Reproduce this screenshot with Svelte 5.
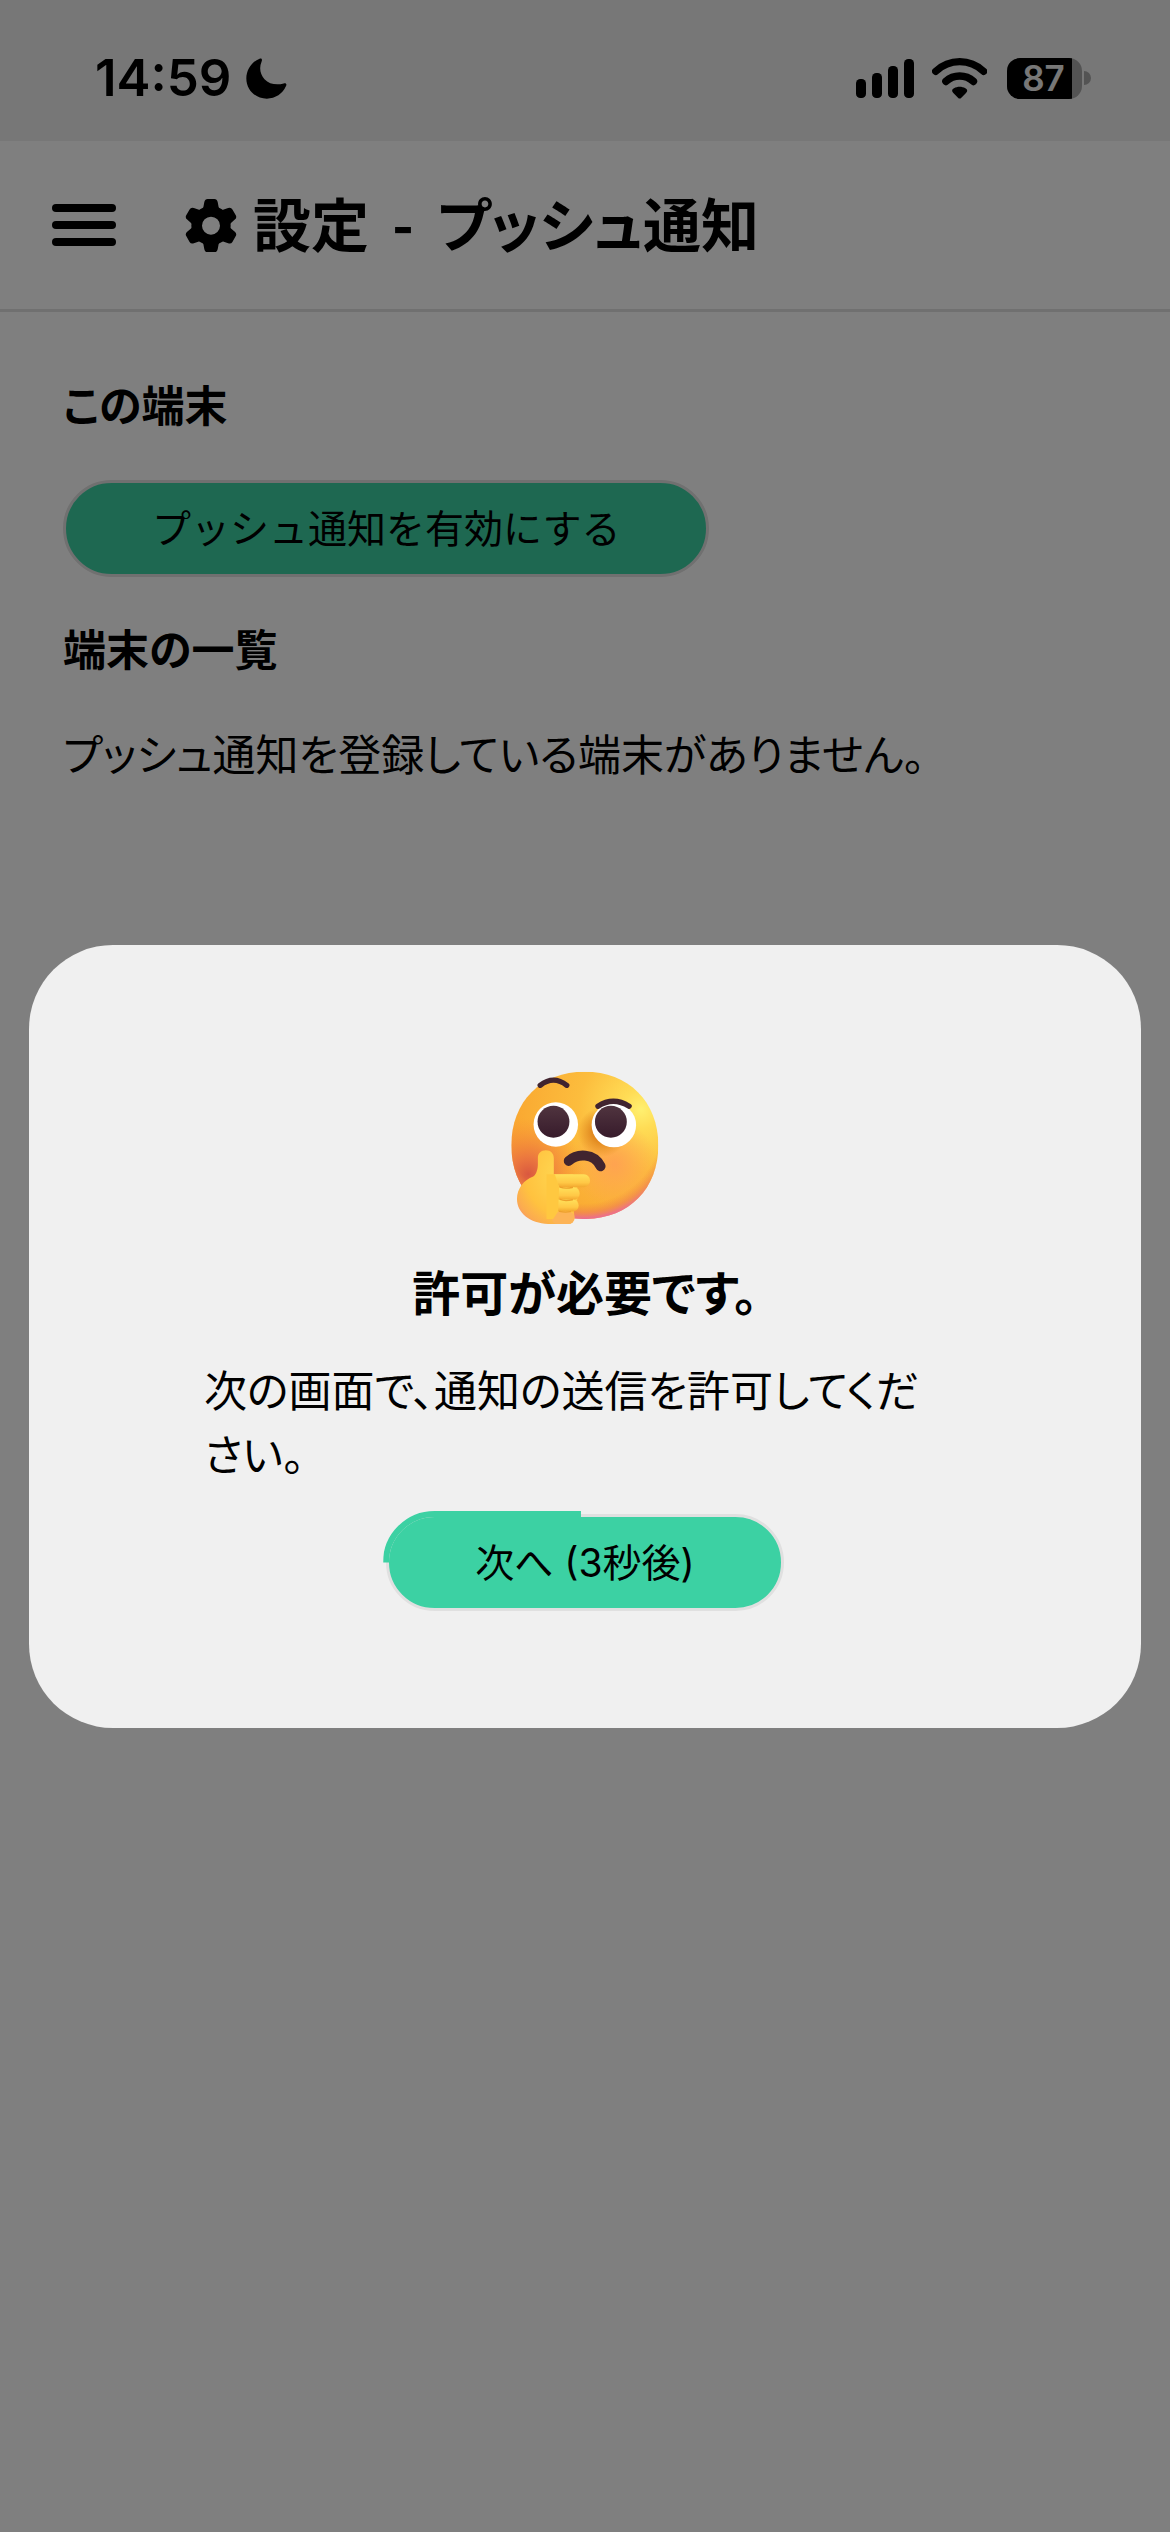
<script>
  let seconds = 3;
  let battery = 87;

  const bars = [
    { x: 0, height: 57 },
    { x: 48, height: 75 },
    { x: 96, height: 96 },
    { x: 144, height: 117 },
  ];
  const teeth = [0, 60, 120, 180, 240, 300];
</script>

<div class="page">
  <div class="status">
    <span class="clock">14:59</span>
    <svg class="moon" viewBox="28 28 124 124" aria-hidden="true">
      <path d="M69 30C76 27 78 33 75 39C67 58 71 78 84 92C98 107 120 111 142 105C149 103 152 107 149 113C139 136 117 151 91 151C56 151 29 124 29 90C29 64 45 40 69 30Z" />
    </svg>
    <div class="indicators">
      <svg class="signal" viewBox="0 0 174 117" aria-hidden="true">
        {#each bars as bar}
          <rect x={bar.x} y={117 - bar.height} width="30" height={bar.height} rx="13" />
        {/each}
      </svg>
      <svg class="wifi" viewBox="261 36 165 123" aria-hidden="true">
        <path d="M272 76Q303 47 344 47T416 76" fill="none" stroke="#000" stroke-width="22" stroke-linecap="round" />
        <path d="M303 106Q320 90 344 90T385 106" fill="none" stroke="#000" stroke-width="23" stroke-linecap="round" />
        <path d="M325 141C319 135 321 130 327 127C337 121 351 121 361 127C367 130 369 135 363 141L349 155Q344 160 339 155Z" />
      </svg>
      <div class="battery">
        <div class="cell">
          <div class="level" style="width: {battery}%"></div>
          <span class="percent">{battery}</span>
        </div>
        <div class="nub"></div>
      </div>
    </div>
  </div>

  <header>
    <button class="menu" aria-label="メニュー">
      <span></span>
      <span></span>
      <span></span>
    </button>
    <svg class="gear" viewBox="44 42 156 159" aria-hidden="true">
      <circle cx="122" cy="122" r="43" fill="none" stroke="#000" stroke-width="32" />
      {#each teeth as angle}
        <path transform="rotate({angle} 122 122)" d="M94 75Q98 72 99 67L102 51Q104 42 112 42H132Q140 42 142 51L145 67Q146 72 150 75L142 90H102Z" />
      {/each}
    </svg>
    <h1>設定 <span class="dash">-</span> プッシュ通知</h1>
  </header>

  <main>
    <h2>この端末</h2>
    <button class="pill">プッシュ通知を有効にする</button>
    <h2>端末の一覧</h2>
    <p>プッシュ通知を登録している端末がありません。</p>
  </main>
</div>

<div class="overlay">
  <div class="modal" role="dialog" aria-modal="true" aria-labelledby="dialog-title">
    <svg class="emoji" viewBox="63 65 446 462" aria-hidden="true">
      <defs>
        <radialGradient id="face" gradientUnits="userSpaceOnUse" cx="455" cy="180" r="420">
          <stop offset="0" stop-color="#fff070" />
          <stop offset=".14" stop-color="#ffdc55" />
          <stop offset=".45" stop-color="#fcbd3d" />
          <stop offset="1" stop-color="#f9a42f" />
        </radialGradient>
        <radialGradient id="cheek" gradientUnits="userSpaceOnUse" cx="115" cy="375" r="170">
          <stop offset="0" stop-color="#d9583f" />
          <stop offset=".3" stop-color="#e96f41" stop-opacity=".85" />
          <stop offset="1" stop-color="#f98a35" stop-opacity="0" />
        </radialGradient>
        <radialGradient id="glow" gradientUnits="userSpaceOnUse" cx="375" cy="345" r="130">
          <stop offset="0" stop-color="#ffa350" />
          <stop offset="1" stop-color="#ffa350" stop-opacity="0" />
        </radialGradient>
        <radialGradient id="rim" gradientUnits="userSpaceOnUse" cx="280" cy="225" r="290">
          <stop offset=".82" stop-color="#f08a3a" stop-opacity="0" />
          <stop offset=".91" stop-color="#ef7d52" stop-opacity=".6" />
          <stop offset="1" stop-color="#e860b0" />
        </radialGradient>
        <radialGradient id="shade" gradientUnits="userSpaceOnUse" cx="338" cy="248" r="75">
          <stop offset=".4" stop-color="#e28a20" />
          <stop offset="1" stop-color="#e28a20" stop-opacity="0" />
        </radialGradient>
        <linearGradient id="pupil" x1="0" y1="0" x2="0" y2="1">
          <stop offset="0" stop-color="#50343f" />
          <stop offset="1" stop-color="#371b2b" />
        </linearGradient>
        <radialGradient id="hand" gradientUnits="userSpaceOnUse" cx="235" cy="375" r="215">
          <stop offset="0" stop-color="#ffdc55" />
          <stop offset=".6" stop-color="#ffc23f" />
          <stop offset=".8" stop-color="#fbab50" />
          <stop offset="1" stop-color="#f57a86" />
        </radialGradient>
        <linearGradient id="finger" x1="0" y1="0" x2="0" y2="1">
          <stop offset="0" stop-color="#ffe05a" />
          <stop offset=".65" stop-color="#ffc846" />
          <stop offset="1" stop-color="#f3a82f" />
        </linearGradient>
        <clipPath id="head">
          <path d="M285 66C417 66 507 156 507 288C507 420 417 510 285 510C153 510 64 420 64 288C64 156 153 66 285 66Z" />
        </clipPath>
      </defs>
      <g clip-path="url(#head)">
        <rect x="63" y="65" width="446" height="446" fill="url(#face)" />
        <rect x="63" y="65" width="446" height="446" fill="url(#glow)" />
        <rect x="63" y="65" width="446" height="446" fill="url(#cheek)" />
        <rect x="63" y="65" width="446" height="446" fill="url(#rim)" />
        <circle cx="338" cy="248" r="75" fill="url(#shade)" />
      </g>
      <circle cx="198" cy="225" r="67" fill="#fff" />
      <circle cx="373" cy="227" r="67" fill="#fff" />
      <circle cx="191" cy="217" r="48" fill="url(#pupil)" />
      <circle cx="364" cy="217" r="48" fill="url(#pupil)" />
      <g fill="none" stroke="#41242f" stroke-linecap="round">
        <path d="M151 107Q191 76 231 107" stroke-width="16" />
        <path d="M325 170Q371 140 419 170" stroke-width="16" />
        <path d="M237 335C262 312 313 310 333 351" stroke-width="30" />
      </g>
      <path d="M168 303C183 303 192 313 192 327V376H250L266 425L262 455L252 488C257 506 252 524 236 525H175C120 523 81 492 81 450C81 418 102 392 130 382C139 376 144 360 144 344V326C144 313 153 303 168 303Z" fill="url(#hand)" />
      <path d="M192 375H282C294 375 301 384 301 395C301 406 293 414 282 414H208Z" fill="url(#finger)" />
      <rect x="190" y="415" width="80" height="37" rx="18" fill="url(#finger)" />
      <rect x="190" y="451" width="77" height="36" rx="18" fill="url(#finger)" />
      <rect x="185" y="487" width="70" height="38" rx="19" fill="#fdb457" />
      <path d="M195 375L208 414L205 487L190 510H170V375Z" fill="#ffc840" />
      <g fill="none" stroke="#eda02b" stroke-width="4" stroke-linecap="round">
        <path d="M211 414Q225 419 248 415" />
        <path d="M211 451Q225 457 248 452" />
        <path d="M209 487Q225 491 242 488" />
      </g>
    </svg>
    <h3 id="dialog-title">許可が必要です。</h3>
    <p>次の画面で、通知の送信を許可してください。</p>
    <button class="pill next">
      次へ ({seconds}秒後)
      <span class="progress"></span>
    </button>
  </div>
</div>

<style>
  :global(body) {
    margin: 0;
    background: #fff;
    color: #000;
    font-family: "Noto Sans CJK JP", sans-serif;
  }
  .page {
    min-height: 100vh;
  }
  .status {
    display: flex;
    align-items: center;
    gap: 14px;
    box-sizing: border-box;
    height: 141px;
    padding: 15px 79px 0 95px;
    background: #efefef;
  }
  .clock {
    font: 600 51px/64px Inter, sans-serif;
  }
  .moon {
    width: 41px;
    height: 41px;
  }
  .indicators {
    display: flex;
    align-items: center;
    gap: 18px;
    margin-left: auto;
  }
  .signal {
    width: 58px;
    height: 39px;
  }
  .wifi {
    width: 55px;
    height: 41px;
  }
  .battery {
    display: flex;
    align-items: center;
    gap: 2px;
    margin-left: 2px;
  }
  .cell {
    display: grid;
    width: 75px;
    height: 41px;
    border-radius: 13px;
    overflow: hidden;
    background: #a6a6a6;
  }
  .level,
  .percent {
    grid-area: 1 / 1;
  }
  .level {
    background: #000;
  }
  .percent {
    padding-right: 2px;
    color: #efefef;
    font: 600 35px/41px Inter, sans-serif;
    text-align: center;
  }
  .nub {
    width: 7px;
    height: 14px;
    border-radius: 0 7px 7px 0;
    background: #a6a6a6;
  }
  header {
    display: flex;
    align-items: center;
    height: 168px;
    padding: 0 52px;
    border-bottom: 3px solid #e0e0e0;
  }
  .menu {
    display: flex;
    flex-direction: column;
    gap: 9px;
    width: 64px;
    padding: 0;
    border: 0;
    background: none;
  }
  .menu span {
    height: 8px;
    border-radius: 4px;
    background: #000;
  }
  .gear {
    width: 52px;
    height: 53px;
    margin: 0 16px 0 69px;
  }
  h1,
  h2,
  h3,
  p {
    margin: 0;
    font-feature-settings: "palt";
  }
  h1 {
    padding-bottom: 6px;
    font-size: 58px;
    line-height: 84px;
  }
  .dash {
    margin: 0 10px;
  }
  h2,
  p {
    font-size: 43px;
    line-height: 57px;
  }
  h2 {
    margin-bottom: 6px;
  }
  h3 {
    font-size: 48px;
    line-height: 71px;
  }
  main {
    display: flex;
    flex-direction: column;
    align-items: flex-start;
    gap: 42px;
    padding: 63px;
  }
  .pill {
    padding: 0 86px;
    border: 3px solid #e0e0e0;
    border-radius: 49px;
    background: #3cd1a3;
    color: #000;
    font-family: Inter, "Noto Sans CJK JP", sans-serif;
    font-size: 39px;
    line-height: 91px;
  }
  .overlay {
    position: fixed;
    inset: 0;
    display: flex;
    align-items: center;
    padding: 141px 29px 0;
    background: rgba(0, 0, 0, .5);
  }
  .modal {
    display: flex;
    flex: 1;
    flex-direction: column;
    align-items: center;
    gap: 30px;
    padding: 126px 175px 117px;
    border-radius: 84px;
    background: #f0f0f0;
  }
  .modal p {
    padding-right: 20px;
    line-height: 64px;
  }
  .emoji {
    width: 148px;
    height: 154px;
  }
  .next {
    position: relative;
  }
  .progress {
    position: absolute;
    inset: -6px;
    border: 6px solid #3cd1a3;
    border-radius: 52px;
    clip-path: inset(0 51% 50% 0);
  }
</style>
